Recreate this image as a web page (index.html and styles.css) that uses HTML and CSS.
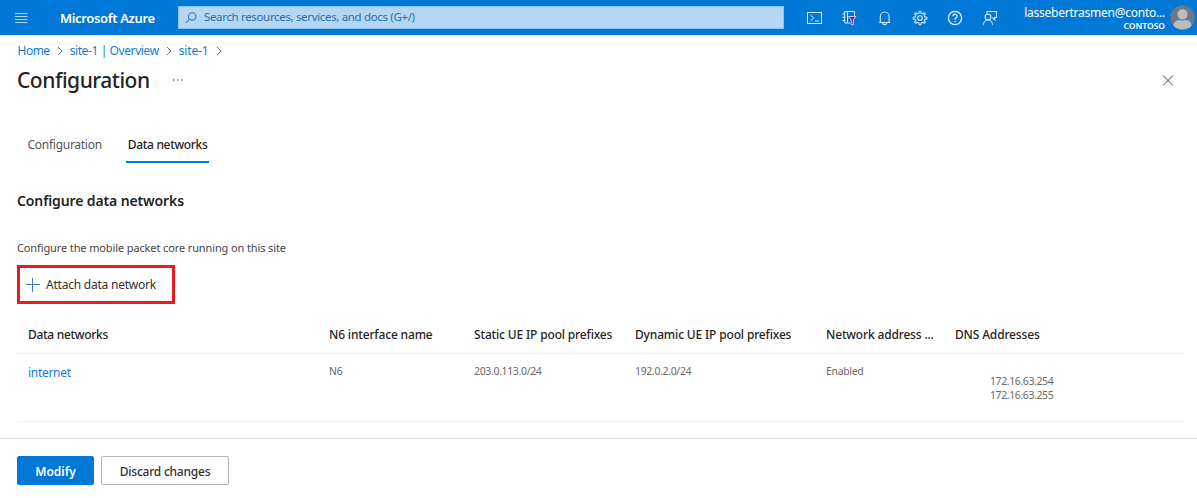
FILE: index.html
```html
<!DOCTYPE html>
<html lang="en">
<head>
<meta charset="utf-8">
<title>Configuration - Microsoft Azure</title>
<link rel="stylesheet" href="styles.css">
</head>
<body>
<header class="topbar">
  <svg class="menu-icon" width="14" height="11" viewBox="0 0 14 11" fill="none" stroke="#c4e1f8"><path d="M1 1.500h12.500M1 4.500h12.500M1 7.500h12.500M1 10.500h12.500" stroke-width=".9"/></svg>
  <div class="brand"><span>Microsoft Azure</span></div>
  <div class="search">
    <svg width="12" height="12" viewBox="0 0 12 12" fill="none" stroke="#3f7fb8" stroke-width="1.1"><circle cx="7.2" cy="4.4" r="3.7"/><path d="M4.5 7.2L.6 11.2"/></svg>
    <span class="search-text">Search resources, services, and docs (G+/)</span>
  </div>
  <nav class="tools">
    <svg width="16" height="16" viewBox="0 0 16 16" fill="none" stroke="#d5eafa"><rect x=".5" y="2.500" width="14" height="11"/><path d="M3.500 5l3.200 3-3.200 3M8 11h4"/></svg>
    <svg width="16" height="16" viewBox="0 0 16 16" fill="none" stroke="#d5eafa"><path d="M12.500 6.500V1.500h-10V13H8M5.500 1.500V13M.5 4h3M.5 7.200h3M.5 10.500h3"/><path d="M6.500 6.500h7.500L11.300 10v4.800H9.200V10z" fill="#8b1a9b" stroke="#ecdff5" stroke-width=".8"/></svg>
    <svg width="16" height="16" viewBox="0 0 16 16" fill="none" stroke="#d5eafa" stroke-width="1.100"><path d="M3.300 12.500V6.700a4.400 4.700 0 0 1 8.800 0v5.800M2.200 12.500h11M5.800 13a1.900 1.800 0 0 0 3.800 0"/></svg>
    <svg width="16" height="16" viewBox="0 0 16 16" fill="none" stroke="#d5eafa" stroke-width="1.100" stroke-linejoin="round"><path d="M6.900 3.200L7.100 1.300h1.800l.2 1.900 1.600.7 1.500-1.200 1.200 1.200-1.200 1.500.7 1.500 1.900.3v1.700l-1.900.3-.7 1.500 1.200 1.500-1.200 1.200-1.500-1.200-1.600.7-.2 1.900H7.100l-.2-1.900-1.500-.7-1.500 1.200-1.200-1.200 1.200-1.500-.7-1.500-1.900-.3V7.200l1.900-.3.7-1.500-1.200-1.500 1.200-1.200 1.500 1.200z"/><circle cx="8" cy="8" r="2.300"/></svg>
    <svg width="16" height="16" viewBox="0 0 16 16" fill="none" stroke="#e3f1fc" stroke-width="1.300"><circle cx="8" cy="8" r="6.600"/><path d="M5.900 6.300a2.100 2 0 1 1 3.200 1.600Q8 8.600 8 9.700M8 10.700v1.400"/></svg>
    <svg width="16" height="16" viewBox="0 0 16 16" fill="none" stroke="#d5eafa" stroke-width="1.100"><path d="M5 3.500V1.500h9.500v6h-1.800v2.300l-2.300-2.300"/><circle cx="6" cy="7" r="2.900"/><path d="M1.500 14.800a4.500 4.800 0 0 1 9 0"/></svg>
  </nav>
  <div class="account"><span class="email">lassebertrasmen@conto...</span><span class="tenant">CONTOSO</span></div>
  <svg class="avatar" width="25" height="25" viewBox="0 0 25 25"><circle cx="12.500" cy="12.500" r="12.200" fill="#6d7886"/><path d="M3.300 20.400Q4 15.500 8.500 15.200h8q4.500.3 5.200 5.200a12.200 12.200 0 0 1-18.400 0z" fill="#b9bdc1"/><circle cx="12.500" cy="9.300" r="5.500" fill="#b9bdc1" stroke="#6d7886" stroke-width=".8"/></svg>
</header>

<nav class="crumbs">
  <a class="c-home">Home</a>
  <svg width="6" height="10" viewBox="0 0 6 10"><path d="M1 1l4 4-4 4"/></svg>
  <a class="c-over">site-1 | Overview</a>
  <svg width="6" height="10" viewBox="0 0 6 10"><path d="M1 1l4 4-4 4"/></svg>
  <a class="c-site">site-1</a>
  <svg width="6" height="10" viewBox="0 0 6 10"><path d="M1 1l4 4-4 4"/></svg>
</nav>

<div class="title-row">
  <h1>Configuration</h1>
  <svg class="dots" width="12" height="4" viewBox="0 0 12 4" fill="#444"><circle cx="1.500" cy="2" r=".8"/><circle cx="5.700" cy="2" r=".8"/><circle cx="9.900" cy="2" r=".8"/></svg>
  <svg class="close" width="12" height="12" viewBox="0 0 12 12" fill="none" stroke="#444"><path d="M1 1.500l10 10M11 1.500l-10 10"/></svg>
</div>

<div class="tabs">
  <div class="tab">Configuration</div>
  <div class="tab active">Data networks</div>
</div>

<main>
  <h2>Configure data networks</h2>
  <p class="desc">Configure the mobile packet core running on this site</p>
  <div class="attach">
    <svg width="14" height="14" viewBox="0 0 14 14" fill="none" stroke="#3d7ec2"><path d="M6.500 0v14M0 6.500h14"/></svg>
    <span>Attach data network</span>
  </div>
  <div class="table">
    <div class="row head">
      <span class="name">Data networks</span><span>N6 interface name</span><span>Static UE IP pool prefixes</span><span>Dynamic UE IP pool prefixes</span><span>Network address ...</span><span>DNS Addresses</span>
    </div>
    <div class="row data">
      <a class="link">internet</a><span>N6</span><span>203.0.113.0/24</span><span>192.0.2.0/24</span><span>Enabled</span><span class="dns">172.16.63.254<br>172.16.63.255</span>
    </div>
  </div>
</main>

<footer>
  <button class="primary">Modify</button>
  <button class="secondary">Discard changes</button>
</footer>
</body>
</html>
```
FILE: styles.css
```css
* { box-sizing: border-box; }
body {
  margin: 0;
  width: 1197px;
  height: 498px;
  overflow: hidden;
  display: flex;
  flex-direction: column;
  background: #fff;
  color: #323130;
  font-family: "Noto Sans", "Open Sans", sans-serif;
  font-size: 12px;
  white-space: nowrap;
}
svg { flex: none; display: block; }
h1, h2, p { margin: 0; }

.topbar {
  flex: none;
  height: 35px;
  display: flex;
  align-items: center;
  background: #0078d7;
  color: #fff;
  padding-left: 14px;
}
.brand { width: 118px; margin-left: 32px; font-size: 13px; font-weight: 600; letter-spacing: -.34px; }
.search {
  width: 606px;
  height: 23px;
  display: flex;
  align-items: center;
  gap: 7px;
  padding-left: 6px;
  background: #b3d6f3;
  border: 1px solid #8fc3ee;
  color: #316fa5;
}
.search-text { font-size: 11.5px; line-height: 16px; padding-bottom: 1px; letter-spacing: -.34px; }
.tools { display: flex; gap: 19px; margin-left: 23px; }
.account {
  width: 167px;
  display: flex;
  flex-direction: column;
  align-items: flex-end;
}
.email { font-size: 12px; line-height: 15px; letter-spacing: -.24px; }
.tenant { font-size: 8.5px; line-height: 11px; font-weight: 600; }
.avatar { margin-left: 5px; }

.crumbs {
  flex: none;
  display: flex;
  align-items: center;
  height: 31px;
  padding-left: 17.5px;
  gap: 7px;
  color: #0f7bd4;
  font-size: 12px;
}
.crumbs svg { fill: none; stroke: #777; }
.c-home { letter-spacing: -.5px; }
.c-over { letter-spacing: -.4px; }
.c-site { letter-spacing: -.15px; }

.title-row { flex: none; display: flex; align-items: center; height: 28px; padding: 0 23px 0 17px; }
h1 { font-size: 21px; line-height: 28px; font-weight: 500; letter-spacing: -.48px; color: #252423; }
.dots { margin-left: 22px; }
.close { margin-left: auto; }

.tabs { flex: none; display: flex; gap: 22px; margin: 32px 0 0 25.5px; }
.tab { height: 37px; line-height: 37px; padding: 0 2px; font-size: 12px; letter-spacing: -.27px; color: #555; }
.tab.active { border-bottom: 2px solid #0078d7; font-weight: 500; letter-spacing: -.33px; color: #252423; }

main { flex: 1; padding: 28px 13px 0 17px; }
h2 { font-size: 14px; line-height: 20px; font-weight: 600; letter-spacing: -.12px; color: #252423; }
.desc { margin-top: 29px; font-size: 11px; line-height: 16px; letter-spacing: -.12px; color: #444; }
.attach {
  display: flex;
  align-items: center;
  gap: 6px;
  width: 158px;
  height: 39px;
  margin-top: 9px;
  padding-left: 6px;
  border: 3px solid #e81b1f;
  font-size: 12px;
  letter-spacing: -.22px;
}
.table { margin-top: 12px; }
.row {
  display: grid;
  grid-template-columns: 301px 145px 161px 191px 129px 1fr;
  padding-left: 11px;
  border-bottom: 1px solid #efefef;
}
.head { height: 38px; line-height: 38px; font-weight: 500; letter-spacing: -.16px; color: #252423; }
.name { letter-spacing: -.3px; }
.data { height: 68px; padding-top: 8px; line-height: 18px; font-size: 10.5px; letter-spacing: -.35px; color: #696969; }
.link { padding-top: 1px; font-size: 12px; line-height: 20px; letter-spacing: -.3px; color: #0f7bd4; }
.dns { padding: 12px 0 0 35px; line-height: 14px; letter-spacing: -.4px; }

footer {
  flex: none;
  height: 60px;
  display: flex;
  gap: 7px;
  padding: 17px 0 0 17px;
  border-top: 1px solid #e3e3e3;
}
button {
  height: 29px;
  padding: 1px 0 0;
  font: 500 12px/27px "Noto Sans", "Open Sans", sans-serif;
  border-radius: 2px;
}
.primary { width: 77px; border: 1px solid #0078d7; background: #0078d7; color: #fff; font-weight: 600; }
.secondary { width: 128px; border: 1px solid #b5b5b5; background: #fff; color: #323130; letter-spacing: -.23px; }
```
